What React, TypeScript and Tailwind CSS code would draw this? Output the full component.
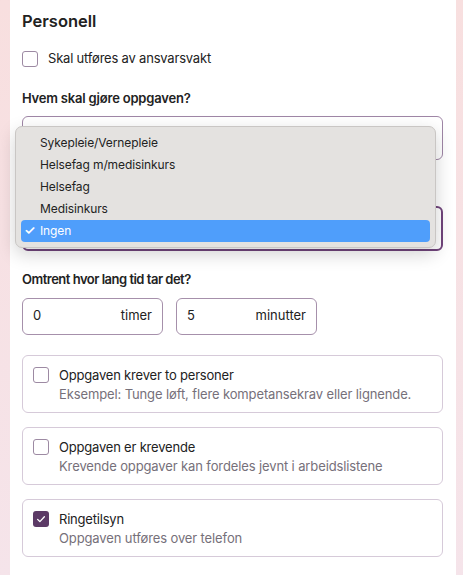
import type { FC } from 'react'

const Check: FC<{ checked?: boolean }> = ({ checked }) =>
  checked ? (
    <span className="flex h-4 w-4 shrink-0 items-center justify-center rounded-[3px] bg-[#5c3a66]">
      <svg viewBox="0 0 16 16" className="h-3 w-3" fill="none" stroke="white" strokeWidth="1.8" strokeLinecap="round" strokeLinejoin="round">
        <path d="M3.5 8.5l3 3 6-6.5" />
      </svg>
    </span>
  ) : (
    <span className="block h-4 w-4 shrink-0 rounded-[3px] border border-[#9d8aa3] bg-white" />
  )

const OptionCard: FC<{ title: string; desc: string; checked?: boolean }> = ({ title, desc, checked }) => (
  <div className="flex h-[58px] gap-[10px] rounded-md border border-[#d6cad9] px-[10px] pt-[10px]">
    <div className="shrink-0 pt-px">
      <Check checked={checked} />
    </div>
    <div className="flex flex-col">
      <span className="text-[13px] leading-[19px] tracking-[-0.2px] text-[#222]">{title}</span>
      <span className="text-[13px] leading-[19px] tracking-[-0.12px] text-[#76707a]">{desc}</span>
    </div>
  </div>
)

const options = ['Sykepleie/Vernepleie', 'Helsefag m/medisinkurs', 'Helsefag', 'Medisinkurs', 'Ingen']

export default function App() {
  return (
    <div className="flex h-[575px] w-[463px] overflow-hidden bg-gradient-to-b from-[#f8dfdf] to-[#f5e4ea] font-['Inter',sans-serif]">
      <div className="relative ml-[10px] flex h-full w-[446px] flex-col bg-white px-[12px] pt-[10px]">
        <h2 className="text-[16.5px] font-semibold leading-[22px] text-[#222]">Personell</h2>

        <label className="mt-[17px] flex items-center gap-[10px]">
          <Check />
          <span className="text-[13px] tracking-[-0.2px] text-[#222]">Skal utføres av ansvarsvakt</span>
        </label>

        <p className="mt-[20px] text-[13px] font-semibold leading-[18px] tracking-[-0.2px] text-[#222]">Hvem skal gjøre oppgaven?</p>

        <div className="mt-[9px] h-[44px] w-[421px] rounded-md border border-[#9f86a6]" />

        <div className="mt-[46px] h-[45px] w-[421px] rounded-md border-2 border-[#71457c]" />

        <p className="mt-[19px] text-[13px] font-semibold leading-[18px] tracking-[-0.5px] text-[#222]">Omtrent hvor lang tid tar det?</p>

        <div className="mt-[10px] flex gap-[13px]">
          <div className="flex h-[37px] w-[141px] items-center justify-between rounded-md border border-[#a690ab] px-[10px] text-[13px] text-[#222]">
            <span>0</span>
            <span>timer</span>
          </div>
          <div className="flex h-[37px] w-[141px] items-center justify-between rounded-md border border-[#a690ab] px-[10px] text-[13px] text-[#222]">
            <span>5</span>
            <span>minutter</span>
          </div>
        </div>

        <div className="mt-[20px] flex w-[421px] flex-col gap-[14px]">
          <OptionCard title="Oppgaven krever to personer" desc="Eksempel: Tunge løft, flere kompetansekrav eller lignende." />
          <OptionCard title="Oppgaven er krevende" desc="Krevende oppgaver kan fordeles jevnt i arbeidslistene" />
          <OptionCard title="Ringetilsyn" desc="Oppgaven utføres over telefon" checked />
        </div>

        {/* native select popup */}
        <div className="absolute left-[5px] top-[126px] w-[421px] rounded-[7px] border border-[#c9c6c4] bg-[#e4e2e0] px-[5px] py-[5px] shadow-[0_6px_18px_rgba(0,0,0,0.18)]">
          {options.map((o) => {
            const sel = o === 'Ingen'
            return (
              <div
                key={o}
                className={`flex h-[22px] items-center rounded-[4px] text-[12px] tracking-[-0.1px] ${sel ? 'bg-[#4f9efb] text-white' : 'text-[#222]'}`}
              >
                <span className="w-[19px] pl-[3px] text-[13px] font-semibold">{sel ? '✓' : ''}</span>
                <span>{o}</span>
              </div>
            )
          })}
        </div>
      </div>
    </div>
  )
}
